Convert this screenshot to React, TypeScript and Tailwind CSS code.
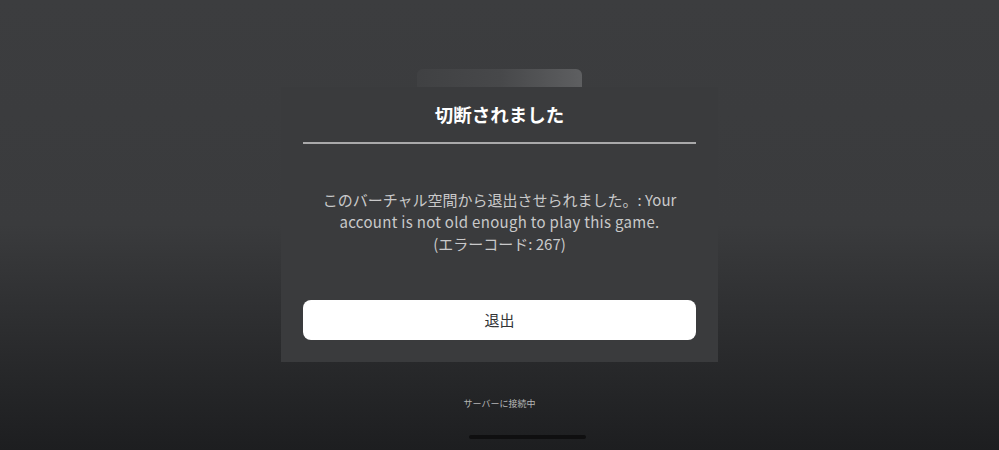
export default function App() {
  const font = { fontFamily: '"Noto Sans CJK JP", "Noto Sans", sans-serif' };
  return (
    <div
      className="w-[999px] h-[450px] overflow-hidden flex flex-col items-center bg-linear-to-b from-[#3c3d3f] via-[#3a3b3d] via-50% to-[#1d1e20]"
      style={font}
    >
      <div className="mt-[69px] w-[165px] h-[18px] rounded-t-[6px] bg-linear-to-r from-[#404143] via-[#47484a] to-[#5e5f61]" />
      <div className="w-[437px] bg-[#3a3b3d] px-[22px] pb-[22px] flex flex-col">
        <div className="h-[55px] flex items-center justify-center text-[18.5px] font-bold text-white leading-none">
          切断されました
        </div>
        <div className="h-[2px] bg-[#a9a9aa]" />
        <div className="mt-[45px] text-center text-[15px] leading-[22px] text-[#c9c9ca]">
          <div>このバーチャル空間から退出させられました。: Your</div>
          <div className="tracking-[0.3px]">account is not old enough to play this game.</div>
          <div>(エラーコード: 267)</div>
        </div>
        <button className="mt-[45px] h-[40px] rounded-[8px] bg-white text-[15px] text-[#333436] flex items-center justify-center">
          退出
        </button>
      </div>
      <div className="mt-[36px] text-[9px] leading-[12px] text-[#b4b4b5]">サーバーに接続中</div>
      <div className="mt-[25px] ml-[56px] w-[117px] h-[4px] rounded-full bg-[#0f0f10]" />
    </div>
  );
}
